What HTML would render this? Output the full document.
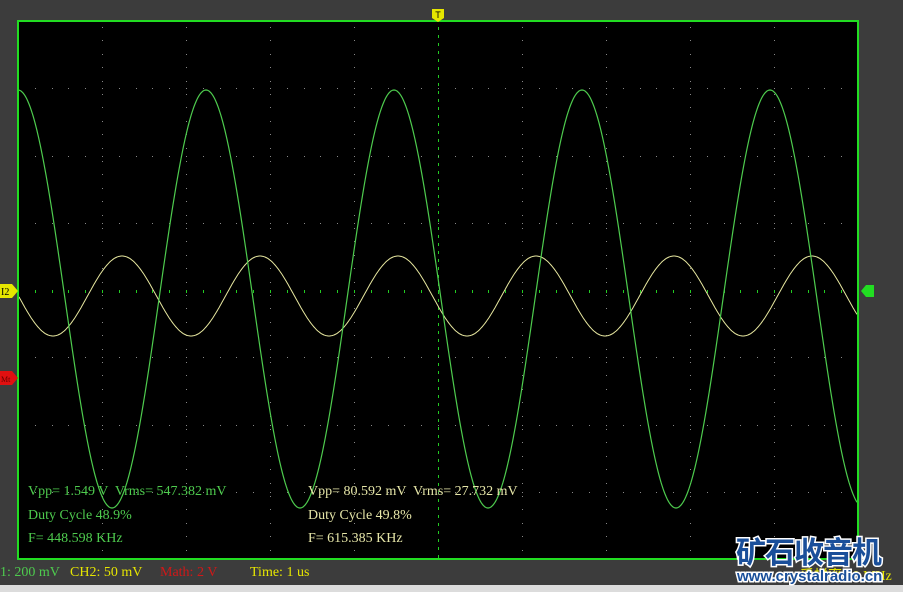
<!DOCTYPE html>
<html><head><style>
body{margin:0;background:#3c3c3c;width:903px;height:592px;overflow:hidden;position:relative;font-family:"Liberation Serif",serif}
svg{position:absolute;left:0;top:0}
.t{position:absolute;font-size:14px;white-space:pre}
.g{color:#4ecb4e}.y{color:#e6e6a8}
</style></head><body>
<svg width="903" height="592" id="s">
<rect x="0" y="585" width="903" height="7" fill="#dcdcdc"/>
<rect x="18" y="21" width="840" height="538" fill="#000"/>
<g id="grid"></g>
<path id="yl" fill="none" stroke="#e8e8a0" stroke-width="1"/>
<path id="gr" fill="none" stroke="#4ecb4e" stroke-width="1.2"/>
<rect x="18" y="21" width="840" height="538" fill="none" stroke="#22dd22" stroke-width="2"/>
<path d="M432 9h12v9l-6 4l-6-4z" fill="#e6e600"/>
<text x="438" y="18" font-size="9" text-anchor="middle" fill="#000" font-family="Liberation Sans">T</text>
<path d="M0 284h12l6 7l-6 7h-12z" fill="#e6e600"/>
<text x="1" y="295" font-size="10" fill="#000">I2</text>
<path d="M0 371h12l6 7l-6 7h-12z" fill="#e01010"/>
<text x="1" y="382" font-size="8" fill="#600">Mt</text>
<path d="M866 285h8v12h-8l-5-6z" fill="#22dd22"/>
</svg>
<div class="t g" style="left:28px;top:484px">Vpp= 1.549 V  Vrms= 547.382 mV</div>
<div class="t g" style="left:28px;top:508px">Duty Cycle 48.9%</div>
<div class="t g" style="left:28px;top:531px">F= 448.598 KHz</div>
<div class="t y" style="left:308px;top:484px">Vpp= 80.592 mV  Vrms= 27.732 mV</div>
<div class="t y" style="left:308px;top:508px">Duty Cycle 49.8%</div>
<div class="t y" style="left:308px;top:531px">F= 615.385 KHz</div>
<div class="t g" style="left:0px;top:565px">1: 200 mV</div>
<div class="t" style="left:70px;top:565px;color:#e6e600">CH2: 50 mV</div>
<div class="t" style="left:160px;top:565px;color:#d01818">Math: 2 V</div>
<div class="t" style="left:250px;top:565px;color:#e6e600">Time: 1 us</div>
<div class="t" style="left:800px;top:565px;color:#e6e600">采样率 40 MHz</div>
<div style="position:absolute;left:736px;top:528px;font:bold 30px 'Noto Sans CJK SC',sans-serif;color:#1a4f9a;letter-spacing:-1px;-webkit-text-stroke:3px #fff;paint-order:stroke">矿石收音机</div>
<div style="position:absolute;left:737px;top:568px;font:bold 15px 'Liberation Sans',sans-serif;color:#1a4f9a;-webkit-text-stroke:3px #fff;paint-order:stroke">www.crystalradio.cn</div>
<script>
var g=document.getElementById("grid"),h="";
var xs=[],ys=[];for(var i=1;i<10;i++)xs.push(18+84*i);for(var j=1;j<8;j++)ys.push(Math.round(21+67.25*j));
xs.forEach(function(x){var c=x==438?"#22cc22":"#888";for(var y=27;y<559;y+=x==438?8:13.4)h+='<rect x="'+x+'" y="'+Math.round(y)+'" width="1" height="'+(x==438?3:1)+'" fill="'+c+'"/>';});
ys.forEach(function(y){var c=y==290?"#22cc22":"#888";for(var x=18+16.8;x<858;x+=16.8)h+='<rect x="'+Math.round(x)+'" y="'+y+'" width="'+(y==290?1:1)+'" height="'+(y==290?3:1)+'" fill="'+c+'"/>';});
g.innerHTML=h;
var a="",b="";for(var x=19;x<=857;x++){var y1=299-209*Math.cos(2*Math.PI*(x-18)/188);var y2=296-40*Math.cos(2*Math.PI*(x-122)/138);a+=(x==19?"M":"L")+x+" "+y1.toFixed(1);b+=(x==19?"M":"L")+x+" "+y2.toFixed(1);}
document.getElementById("gr").setAttribute("d",a);document.getElementById("yl").setAttribute("d",b);
</script>
</body></html>
